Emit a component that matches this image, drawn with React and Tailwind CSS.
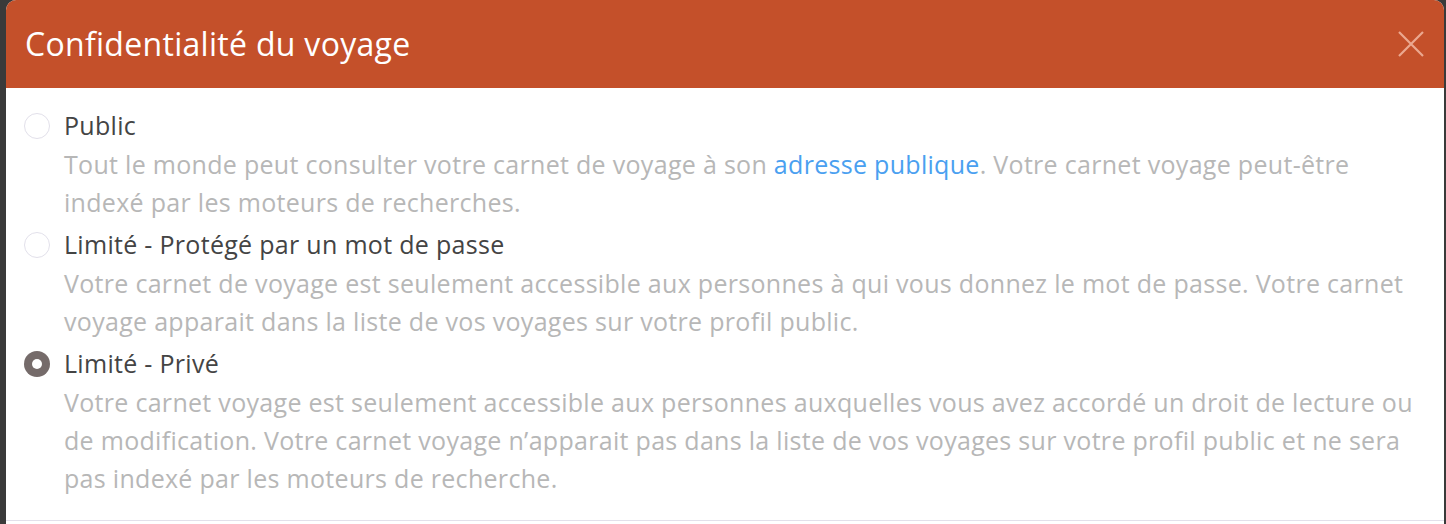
import React from "react";

const options = [
  {
    id: "public",
    label: "Public",
    desc: (
      <>
        Tout le monde peut consulter votre carnet de voyage à son{" "}
        <a href="#" className="text-[#4aa0f0]">adresse publique</a>. Votre carnet voyage peut-être
        indexé par les moteurs de recherches.
      </>
    ),
  },
  {
    id: "password",
    label: "Limité - Protégé par un mot de passe",
    desc: "Votre carnet de voyage est seulement accessible aux personnes à qui vous donnez le mot de passe. Votre carnet voyage apparait dans la liste de vos voyages sur votre profil public.",
  },
  {
    id: "private",
    label: "Limité - Privé",
    desc: "Votre carnet voyage est seulement accessible aux personnes auxquelles vous avez accordé un droit de lecture ou de modification. Votre carnet voyage n’apparait pas dans la liste de vos voyages sur votre profil public et ne sera pas indexé par les moteurs de recherche.",
  },
];

function Radio({ checked }) {
  if (checked) {
    return (
      <span className="flex h-[26px] w-[26px] shrink-0 items-center justify-center rounded-full bg-[#756b6a]">
        <span className="h-[10px] w-[10px] rounded-full bg-white" />
      </span>
    );
  }
  return <span className="h-[26px] w-[26px] shrink-0 rounded-full border border-[#e2e0ea] bg-white" />;
}

export default function App() {
  const selected = "private";
  return (
    <div className="h-[524px] bg-[#3a3a3a] pl-[6px] pr-[2px] font-['Open_Sans',sans-serif]">
      {/* Modal */}
      <div className="h-full overflow-hidden rounded-t-[10px] bg-white">
        <div className="flex h-[88px] items-center justify-between bg-[#c4502a] pl-[19px] pr-[18px]">
          <h2 className="text-[32px] tracking-[0.3px] text-white">Confidentialité du voyage</h2>
          <button className="text-[#eba890]">
            <svg width="30" height="30" viewBox="0 0 30 30" stroke="currentColor" strokeWidth="2.2" fill="none">
              <path d="M3 3 L27 27 M27 3 L3 27" />
            </svg>
          </button>
        </div>

        <div className="flex flex-col gap-[4px] border-b border-[#e2e0ea] pl-[18px] pr-[12px] pt-[18px] pb-[23px] tracking-[0.3px]">
          {options.map((o) => (
            <label key={o.id} className="flex flex-col">
              <div className="flex items-center gap-[14px]">
                <Radio checked={o.id === selected} />
                <span className="text-[25px] leading-[39px] text-[#444]">{o.label}</span>
              </div>
              <p className="pl-[40px] text-[25px] leading-[38px] text-[#b7b7b7]">{o.desc}</p>
            </label>
          ))}
        </div>
      </div>
    </div>
  );
}
